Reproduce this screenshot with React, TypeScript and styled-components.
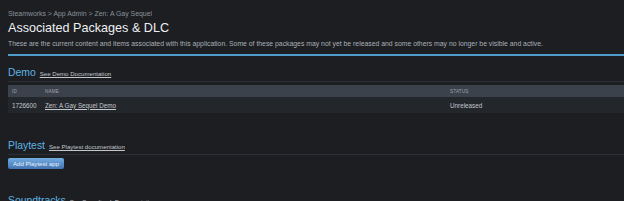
import React from "react";
import styled, { createGlobalStyle } from "styled-components";

const Global = createGlobalStyle`
  html, body { margin: 0; padding: 0; background: #1c1e22; overflow: hidden; height: 201px; }
  body { font-family: "Liberation Sans", Arial, sans-serif; }
`;

const Page = styled.div`
  padding: 9px 0 0 8px;
  width: 616px;
  color: #c6d4df;
`;

const Breadcrumb = styled.div`
  font-size: 6.9px;
  line-height: 9px;
  color: #8b929a;
`;

const Title = styled.h1`
  margin: 3px 0 0;
  font-size: 12.6px;
  line-height: 14px;
  font-weight: 400;
  color: #eef0f2;
`;

const Description = styled.p`
  margin: 4px 0 0;
  font-size: 6.85px;
  line-height: 9px;
  color: #a9afb6;
  white-space: nowrap;
`;

const Rule = styled.div`
  margin-top: 6px;
  height: 2px;
  background: #4f9ccb;
`;

const Section = styled.section<{ $top: number }>`
  margin-top: ${(p) => p.$top}px;
`;

const SectionHead = styled.div<{ $border?: boolean }>`
  display: flex;
  align-items: baseline;
  gap: 4px;
  padding-bottom: 2px;
  border-bottom: ${(p) => (p.$border ? "1px solid #2c2f35" : "none")};
`;

const SectionTitle = styled.h2`
  margin: 0;
  font-size: 10.4px;
  line-height: 13px;
  font-weight: 400;
  color: #5fb3e4;
`;

const DocLink = styled.a`
  font-size: 6.1px;
  color: #c4c8cc;
  text-decoration: underline;
`;

const Table = styled.div`
  margin-top: 3px;
  display: grid;
  grid-template-columns: 33px 405px 1fr;
`;

const HeadCell = styled.div`
  background: #3c424c;
  height: 12px;
  display: flex;
  align-items: center;
  padding-left: 4px;
  font-size: 4.6px;
  letter-spacing: 0.2px;
  color: #9aa2ab;
  text-transform: uppercase;
`;

const Cell = styled.div`
  background: #23262b;
  height: 16px;
  display: flex;
  align-items: center;
  padding-left: 4px;
  font-size: 6.3px;
  color: #c3c8cd;
`;

const CellLink = styled.a`
  color: #c3c8cd;
  text-decoration: underline;
`;

const Button = styled.button`
  margin-top: 3px;
  display: block;
  height: 11px;
  padding: 0 5px;
  border: none;
  border-radius: 2px;
  background: linear-gradient(to bottom, #72aee0 0%, #4373b3 100%);
  color: #e9f1fa;
  font-family: "Liberation Sans", Arial, sans-serif;
  font-size: 6.1px;
  line-height: 11px;
  cursor: pointer;
`;

export default function App() {
  return (
    <>
      <Global />
      <Page>
        <Breadcrumb>Steamworks &gt; App Admin &gt; Zen: A Gay Sequel</Breadcrumb>
        <Title>Associated Packages &amp; DLC</Title>
        <Description>
          These are the current content and items associated with this application. Some of these
          packages may not yet be released and some others may no longer be visible and active.
        </Description>
        <Rule />
        <Section $top={10}>
          <SectionHead $border>
            <SectionTitle>Demo</SectionTitle>
            <DocLink href="#">See Demo Documentation</DocLink>
          </SectionHead>
          <Table>
            <HeadCell>ID</HeadCell>
            <HeadCell>Name</HeadCell>
            <HeadCell>Status</HeadCell>
            <Cell>1726600</Cell>
            <Cell>
              <CellLink href="#">Zen: A Gay Sequel Demo</CellLink>
            </Cell>
            <Cell>Unreleased</Cell>
          </Table>
        </Section>
        <Section $top={26}>
          <SectionHead $border>
            <SectionTitle>Playtest</SectionTitle>
            <DocLink href="#">See Playtest documentation</DocLink>
          </SectionHead>
          <Button>Add Playtest app</Button>
        </Section>
        <Section $top={25}>
          <SectionHead>
            <SectionTitle>Soundtracks</SectionTitle>
            <DocLink href="#">See Soundtrack Documentation</DocLink>
          </SectionHead>
        </Section>
      </Page>
    </>
  );
}
